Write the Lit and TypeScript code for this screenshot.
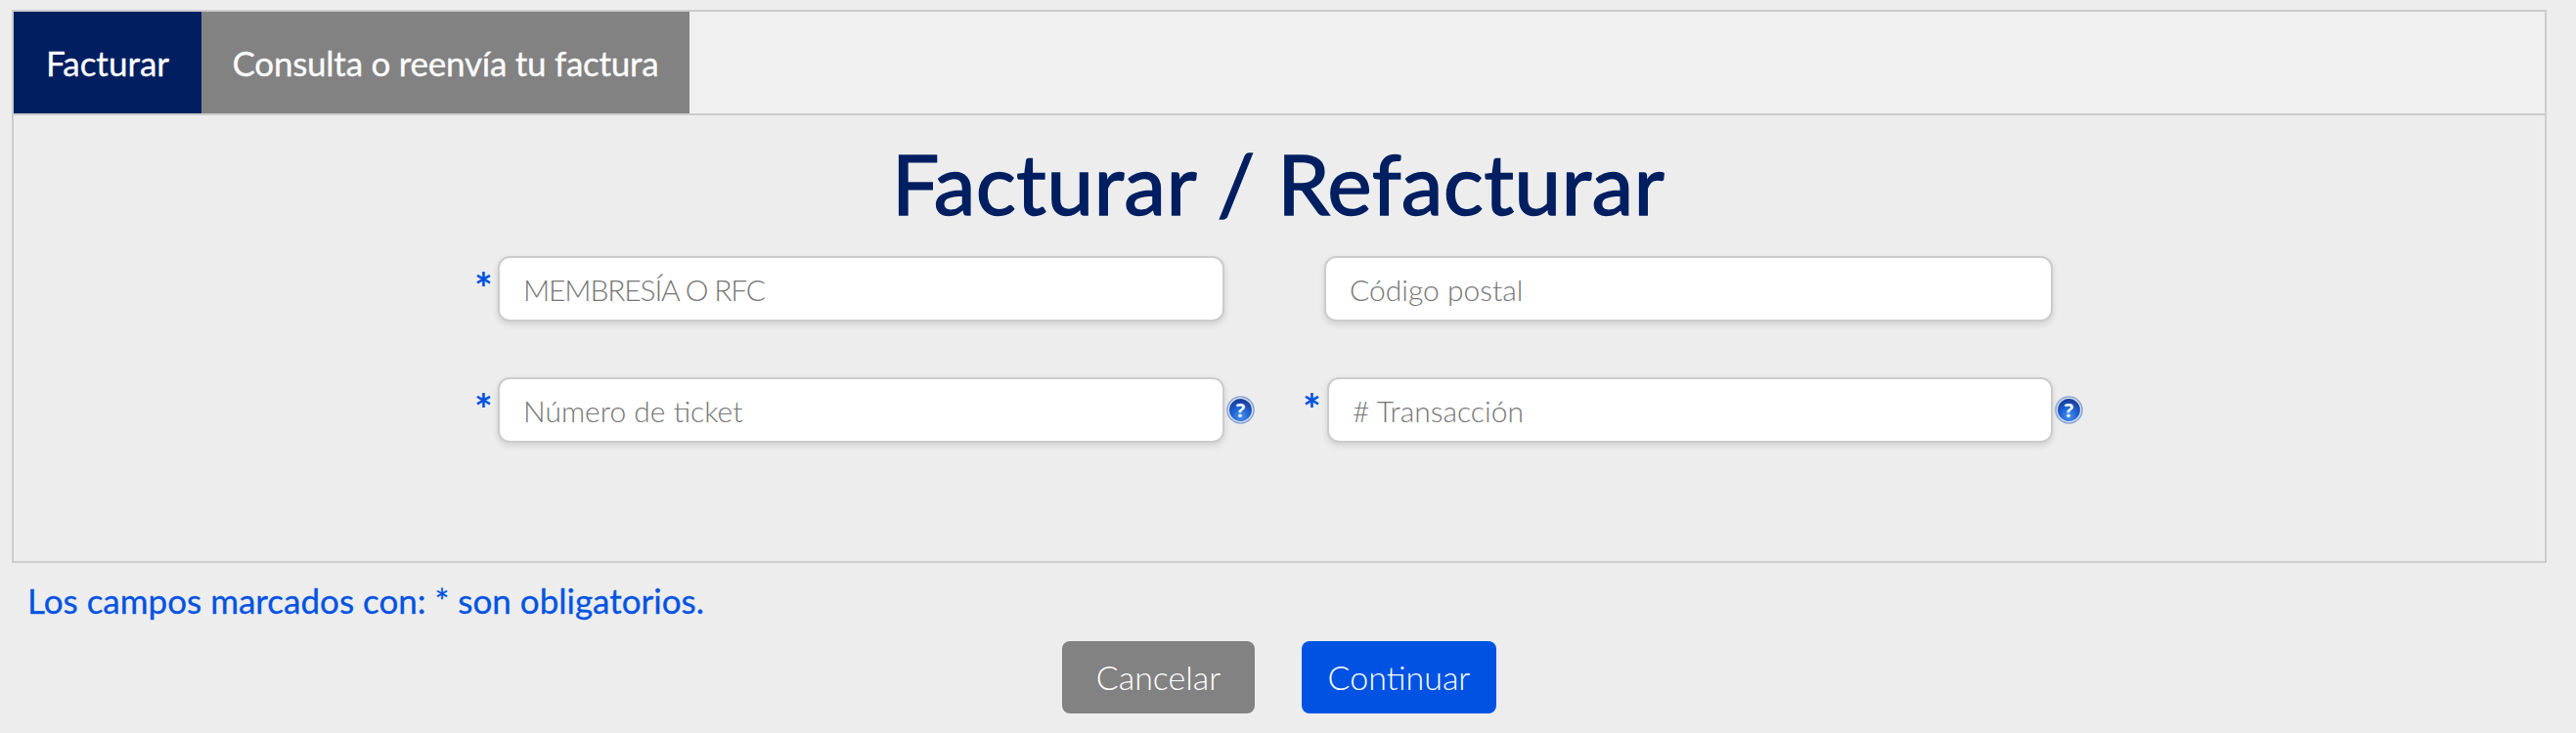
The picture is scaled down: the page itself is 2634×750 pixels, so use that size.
import { LitElement, html, css } from 'lit'
import { customElement } from 'lit/decorators.js'

@customElement('help-icon')
export class HelpIcon extends LitElement {
  static styles = css`
    :host { display: block; width: 29px; height: 29px; flex: none; }
    svg { display: block; }
    text { font: 700 20px 'Open Sans', sans-serif; fill: #f4f8ff; }
  `

  render() {
    return html`
      <svg width="29" height="29" viewBox="0 0 29 29" aria-label="Ayuda">
        <defs>
          <radialGradient id="ball" cx="50%" cy="78%" r="70%">
            <stop offset="0" stop-color="#4a94ec" />
            <stop offset="0.55" stop-color="#1f62d6" />
            <stop offset="1" stop-color="#173f9e" />
          </radialGradient>
        </defs>
        <circle cx="14.5" cy="14.5" r="14.3" fill="#8aa3cc" />
        <circle cx="14.5" cy="14.5" r="12.9" fill="#cfdcf0" />
        <circle cx="14.5" cy="14.5" r="11.4" fill="url(#ball)" />
        <text x="14.5" y="21.5" text-anchor="middle">?</text>
      </svg>
    `
  }
}

@customElement('app-root')
export class AppRoot extends LitElement {
  static styles = css`
    :host {
      display: block;
      width: 2634px;
      height: 750px;
      background: #ededed;
      font-family: Lato, 'Open Sans', sans-serif;
      overflow: hidden;
    }
    .wrap { padding: 10px 30px 0 12px; }
    .panel {
      border: 2px solid #ccc;
      height: 566px;
      box-sizing: border-box;
    }
    .tabs {
      display: flex;
      height: 106px;
      background: #f0f0f0;
      border-bottom: 2px solid #ccc;
      box-sizing: border-box;
    }
    .tab {
      display: flex;
      align-items: center;
      justify-content: center;
      height: 104px;
      color: #fff;
      font-size: 35px;
      -webkit-text-stroke: 0.3px #fff;
    }
    .tab.active { width: 192px; background: #001e60; }
    .tab.other { width: 499px; background: #828282; letter-spacing: -0.25px; }
    h1 {
      margin: 0;
      padding: 23px 2px 0 0;
      height: 144px;
      box-sizing: border-box;
      text-align: center;
      color: #001e60;
      font-size: 86px;
      line-height: 92px;
      font-weight: 400;
      letter-spacing: 0.3px;
      -webkit-text-stroke: 1.4px #001e60;
    }
    .form {
      display: grid;
      grid-template-columns: 848px 770px;
      row-gap: 57px;
      padding-left: 472px;
    }
    .field { display: flex; height: 67px; }
    .star {
      flex: none;
      width: 24px;
      margin-left: -1px;
      padding-top: 10px;
      color: #0053e2;
      font-size: 44px;
      line-height: 44px;
      font-weight: 700;
      box-sizing: border-box;
    }
    .field.second .star { width: 25px; margin-left: -2px; }
    .spacer { flex: none; width: 20px; }
    .input {
      flex: none;
      width: 743px;
      height: 67px;
      box-sizing: border-box;
      display: flex;
      align-items: center;
      padding-left: 24px;
      background: #fff;
      border: 2px solid #ccc;
      border-radius: 12px;
      box-shadow: 0 3px 6px rgba(0, 0, 0, 0.12);
      color: #767676;
      font-size: 30px;
      font-weight: 300;
    }
    .input.wide { width: 745px; }
    .field.second .input { width: 742px; }
    .input.caps { letter-spacing: -1.15px; }
    .field help-icon { margin: 19px 0 0 2px; }
    .note {
      margin: 0;
      padding: 17px 0 0 16px;
      height: 80px;
      box-sizing: border-box;
      color: #0053e2;
      font-size: 35px;
      line-height: 42px;
      -webkit-text-stroke: 0.3px #0053e2;
    }
    .actions {
      display: flex;
      gap: 48px;
      padding-left: 1074px;
    }
    .btn {
      display: flex;
      align-items: center;
      justify-content: center;
      height: 74px;
      padding-bottom: 2px;
      box-sizing: border-box;
      border-radius: 8px;
      color: #fff;
      font-size: 34px;
      font-weight: 300;
    }
    .btn.cancel { width: 197px; background: #828282; }
    .btn.go { width: 199px; background: #0053e2; }
  `

  render() {
    return html`
      <div class="wrap">
        <div class="panel">
          <div class="tabs">
            <div class="tab active">Facturar</div>
            <div class="tab other">Consulta o reenvía tu factura</div>
          </div>
          <h1>Facturar / Refacturar</h1>
          <div class="form">
            <div class="field">
              <span class="star">*</span>
              <div class="input caps">MEMBRESÍA O RFC</div>
            </div>
            <div class="field">
              <span class="spacer"></span>
              <div class="input wide">Código postal</div>
            </div>
            <div class="field">
              <span class="star">*</span>
              <div class="input">Número de ticket</div>
              <help-icon></help-icon>
            </div>
            <div class="field second">
              <span class="star">*</span>
              <div class="input"># Transacción</div>
              <help-icon></help-icon>
            </div>
          </div>
        </div>
        <p class="note">Los campos marcados con: * son obligatorios.</p>
        <div class="actions">
          <div class="btn cancel">Cancelar</div>
          <div class="btn go">Continuar</div>
        </div>
      </div>
    `
  }
}
